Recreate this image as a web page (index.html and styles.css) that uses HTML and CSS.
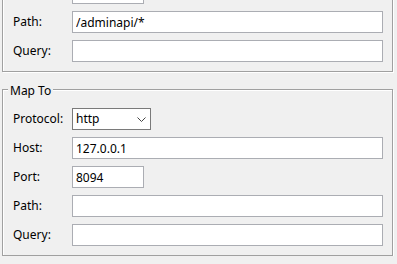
FILE: index.html
```html
<!DOCTYPE html>
<html lang="en">
<head>
    <meta charset="UTF-8">
    <title>Route Settings</title>
    <link rel="stylesheet" href="styles.css">
</head>
<body>
    <div class="group group-match">
        <div class="row">
            <span class="label"></span>
            <input type="text" class="field short" value="">
        </div>
        <div class="row">
            <label class="label">Path:</label>
            <input type="text" class="field" value="/adminapi/*">
        </div>
        <div class="row">
            <label class="label">Query:</label>
            <input type="text" class="field" value="">
        </div>
    </div>

    <div class="group group-map">
        <div class="legend">Map To</div>
        <div class="row">
            <label class="label">Protocol:</label>
            <div class="combo">
                <span>http</span>
                <svg class="chevron" width="9" height="5" viewBox="0 0 9 5">
                    <polyline points="0.5,0.5 4.5,4.5 8.5,0.5" fill="none" stroke="#444" stroke-width="1"/>
                </svg>
            </div>
        </div>
        <div class="row">
            <label class="label">Host:</label>
            <input type="text" class="field" value="127.0.0.1">
        </div>
        <div class="row">
            <label class="label">Port:</label>
            <input type="text" class="field short" value="8094">
        </div>
        <div class="row">
            <label class="label">Path:</label>
            <input type="text" class="field" value="">
        </div>
        <div class="row">
            <label class="label">Query:</label>
            <input type="text" class="field" value="">
        </div>
    </div>
</body>
</html>
```

FILE: styles.css
```css
/* General Reset */
* {
    margin: 0;
    padding: 0;
    box-sizing: border-box;
}

body {
    font-family: 'Noto Sans', 'Liberation Sans', sans-serif;
    font-size: 12px;
    line-height: 16px;
    background-color: #f0f0f0;
    color: #000;
    padding-left: 2px;
    overflow: hidden;
}

/* etched group box */
.group {
    position: relative;
    width: 391px;
    border: 1px solid #a0a0a0;
    box-shadow: inset 1px 1px 0 #fff, 1px 1px 0 #fff;
    padding: 18px 9px 9px 10px;
    display: flex;
    flex-direction: column;
    gap: 7px;
}

.group-match {
    margin-top: -30px;
    padding-top: 11px;
}

.group-map {
    margin-top: 17px;
}

.legend {
    position: absolute;
    top: -7px;
    left: 5px;
    padding: 0 2px;
    background: #f0f0f0;
}

.row {
    display: flex;
    align-items: center;
    height: 22px;
}

.label {
    width: 59px;
    flex-shrink: 0;
}

.field {
    width: 311px;
    height: 22px;
    border: 1px solid #abadb3;
    background: #fff;
    padding: 0 3px;
    font-family: inherit;
    font-size: 12px;
    color: #000;
    outline: none;
}

.field.short {
    width: 72px;
}

.combo {
    width: 79px;
    height: 22px;
    border: 1px solid #7a7a7a;
    background: #fff;
    padding: 0 4px 0 3px;
    display: flex;
    align-items: center;
    justify-content: space-between;
}

.chevron {
    display: block;
}
```
